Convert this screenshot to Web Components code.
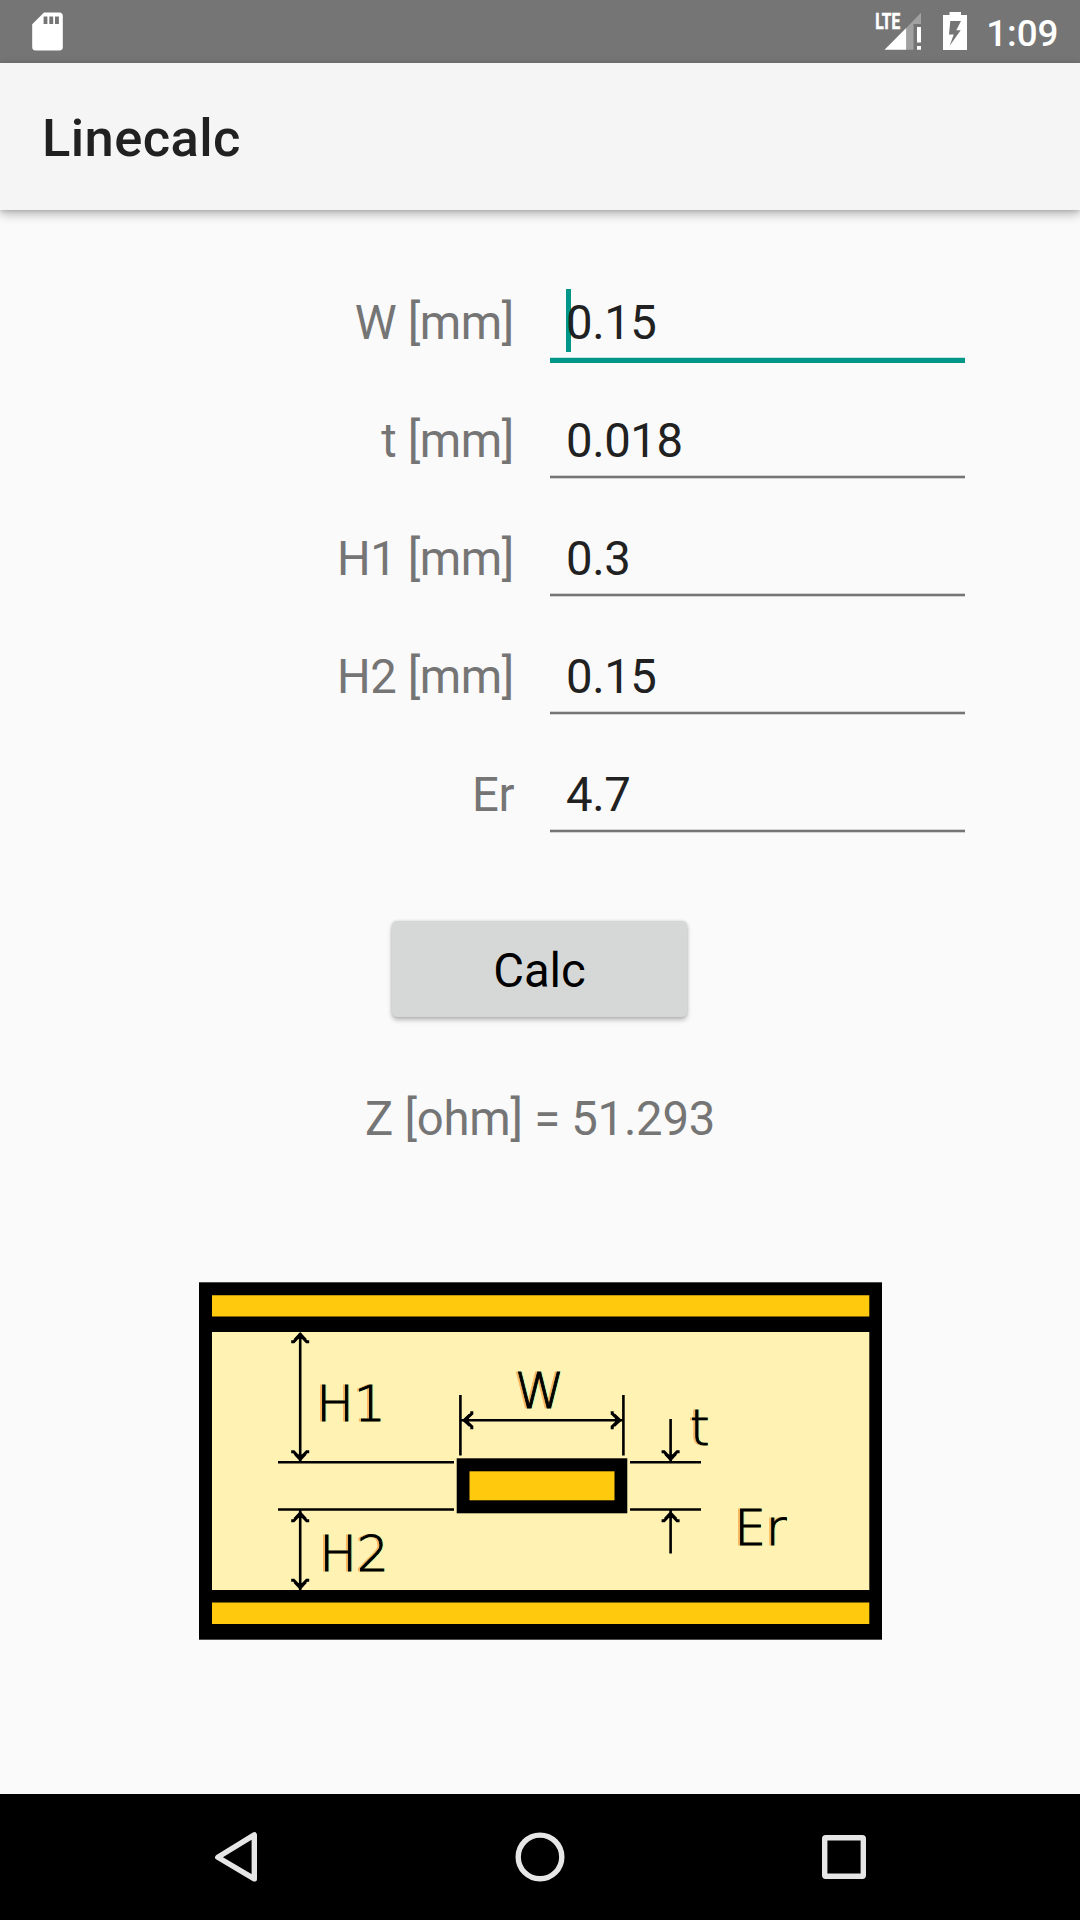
<!DOCTYPE html>
<html lang="en">
<head>
<meta charset="utf-8">
<title>Linecalc</title>
<style>
html,body{margin:0;padding:0;background:#fafafa}
body{font-family:Roboto,"Liberation Sans",sans-serif}
</style>
</head>
<body>
<line-calc-app></line-calc-app>
<script>
function define(name, html) {
  const tpl = document.createElement('template');
  tpl.innerHTML = html;
  customElements.define(name, class extends HTMLElement {
    constructor() {
      super();
      this.attachShadow({ mode: 'open' }).appendChild(tpl.content.cloneNode(true));
    }
  });
}

define('status-bar', `
<style>
:host{display:flex;justify-content:space-between;height:63px;background:#757575;color:#fff}
svg{display:block;flex:none}
.right{display:flex}
.clock{font-size:36.75px;font-weight:500;line-height:43px;padding:12px 21.500px 0 6.300px}
.lte{font:700 21.6px Roboto,sans-serif;stroke:#fff;stroke-width:.6}
</style>
<svg width="80" height="63" viewBox="0 0 80 63">
  <path fill="#fff" fill-rule="evenodd" d="M44 12.5H59.200a3.600 3.600 0 0 1 3.600 3.600V47a3.600 3.600 0 0 1-3.600 3.600H35.800A3.600 3.600 0 0 1 32.200 47V24.300ZM43.600 16.500V24H47.400V16.500ZM49.300 16.500V24H53.200V16.500ZM55 16.500V24H58.900V16.500Z"/>
</svg>
<div class="right">
<svg width="110" height="63" viewBox="870 0 110 63">
  <text class="lte" x="875.200" y="29" fill="#fff" textLength="25" lengthAdjust="spacingAndGlyphs">LTE</text>
  <path fill="#fff" d="M884.500 49.700L906.200 28V49.700Z"/>
  <path fill="#fff" fill-opacity=".32" d="M906.200 28L921 12.800V24H913.500V49.700H906.200Z"/>
  <path fill="#fff" d="M917 27h4v15.500h-4zM917 46h4v3.700h-4z"/>
  <path fill="#fff" fill-rule="evenodd" d="M949.500 12H961V15H967V50H943V15H949.500ZM950.300 21L949 34.500H953.700L949.700 45.800L960.700 30.300H956.300L961 21Z"/>
</svg>
<div class="clock">1:09</div>
</div>`);

define('app-bar', `
<style>
:host{display:flex;box-sizing:border-box;height:147px;padding:45px 42px 0;background:#f5f5f5;color:#212121;
font-size:52.5px;font-weight:500;letter-spacing:.4px;line-height:61px;box-shadow:0 4px 10px rgba(0,0,0,.28),0 1px 4px rgba(0,0,0,.12);position:relative}
</style><slot></slot>`);

define('calc-field', `
<style>
:host{display:flex;height:118px;font-size:47.25px;line-height:56px;letter-spacing:-.4px}
.label{width:514px;padding-top:25px;text-align:right;color:#757575;flex:none}
.box{display:flex;flex-direction:column;width:415px;margin-left:36px;padding-top:25px}
.val{position:relative;height:56px;padding-left:16px;color:#212121}
.line{margin-top:6px;height:4px;background:linear-gradient(#d2d2d2 1px,#757575 1px 3px,#d2d2d2 3px)}
:host([focused]) .line{height:6px;background:linear-gradient(#c4e4e1 1px,#009688 1px)}
.caret{display:none;position:absolute;left:16px;top:-6px;width:5px;height:63px;background:#009688}
:host([focused]) .caret{display:block}
.txt{position:relative}
</style>
<div class="label"><slot name="label"></slot></div>
<div class="box"><div class="val"><i class="caret"></i><span class="txt"><slot></slot></span></div><div class="line"></div></div>`);

define('calc-button', `
<style>
:host{display:block}
button{display:block;box-sizing:border-box;width:295px;height:96px;margin:0 0 0 392px;padding:3px 0 0;border:0;border-radius:5px;background:#d6d8d7;
color:#000;font:400 47.250px/56px Roboto,sans-serif;box-shadow:0 3px 5px rgba(0,0,0,.26),0 0 3px rgba(0,0,0,.14)}
</style><button><slot></slot></button>`);

define('stripline-diagram', `
<style>
:host{display:block;width:683px;height:358px}
svg{display:block}
text{font:200 50px "DejaVu Sans","DejaVu Sans Light",sans-serif;stroke:#000;stroke-width:.9;filter:drop-shadow(-1.500px 0 .4px rgba(255,150,50,.7)) drop-shadow(1.500px 0 .4px rgba(150,255,200,.7))}
.l{stroke:#000;stroke-width:2.600;fill:none}
</style>
<svg width="683" height="358" viewBox="199 1282 683 358">
  <rect x="199" y="1282.300" width="683" height="357.400"/>
  <path fill="#ffc90e" d="M212 1295.200H869.300V1316.500H212ZM212 1602.600H869.300V1624H212Z"/>
  <path fill="#fff2b3" d="M212 1332H869.300V1590H212Z"/>
  <rect x="456.700" y="1458.300" width="170.600" height="55"/>
  <rect x="469.500" y="1471.300" width="145" height="29" fill="#ffc90e"/>
  <path class="l" d="M278 1462.300H454M278 1509.500H454M630 1462.300H701M630 1509.500H701M460.400 1395V1455.500M623.400 1395V1455.500M300.200 1333V1462M300.200 1510V1590M461 1420.200H623M670.600 1419V1462M670.600 1510V1553.500"/>
  <defs><g id="a"><path d="M0 0L-6.500 7H6.500Z"/><path d="M-9 9.800H-6.500L-1 4H1L6.500 9.800H9" fill="none" stroke="#000" stroke-width="3"/></g></defs>
  <use href="#a" transform="translate(300.200 1332)"/>
  <use href="#a" transform="translate(300.200 1461.500) scale(1 -1)"/>
  <use href="#a" transform="translate(300.200 1511)"/>
  <use href="#a" transform="translate(300.200 1590) scale(1 -1)"/>
  <use href="#a" transform="translate(462 1420.200) rotate(-90)"/>
  <use href="#a" transform="translate(622 1420.200) rotate(90)"/>
  <use href="#a" transform="translate(670.600 1461.500) scale(1 -1)"/>
  <use href="#a" transform="translate(670.600 1511)"/>
  <text x="316.500" y="1421">H1</text>
  <text x="319.500" y="1571">H2</text>
  <text x="515" y="1407.800">W</text>
  <text x="690" y="1444.500">t</text>
  <text x="734.500" y="1545">Er</text>
</svg>`);

define('nav-bar', `
<style>
:host{display:flex;justify-content:center;height:126px;background:#000}
svg{display:block;fill:none;stroke:#e6e6e6;stroke-width:5.400;stroke-linejoin:round}
</style>
<svg width="304" height="126" viewBox="84 1794 304 126"><path d="M217.800 1857.300L254.300 1834.900V1878.900Z"/></svg>
<svg width="304" height="126" viewBox="388 1794 304 126"><circle cx="540" cy="1856.900" r="21.800"/></svg>
<svg width="304" height="126" viewBox="692 1794 304 126"><rect x="824.700" y="1837.700" width="38.600" height="38.600" rx="1"/></svg>`);

define('line-calc-app', `
<style>
:host{display:flex;flex-direction:column;width:1080px;height:1920px;background:#fafafa;overflow:hidden}
main{display:flex;flex-direction:column;flex:1;padding-top:60px}
calc-button{margin-top:61px}
.result{margin-top:74px;text-align:center;font-size:47.250px;line-height:56px;letter-spacing:-.25px;color:#757575}
stripline-diagram{margin:135px 0 0 199px}
</style>
<status-bar></status-bar>
<app-bar>Linecalc</app-bar>
<main>
  <calc-field focused><span slot="label">W [mm]</span>0.15</calc-field>
  <calc-field><span slot="label">t [mm]</span>0.018</calc-field>
  <calc-field><span slot="label">H1 [mm]</span>0.3</calc-field>
  <calc-field><span slot="label">H2 [mm]</span>0.15</calc-field>
  <calc-field><span slot="label">Er</span>4.7</calc-field>
  <calc-button>Calc</calc-button>
  <div class="result">Z [ohm] = 51.293</div>
  <stripline-diagram></stripline-diagram>
</main>
<nav-bar></nav-bar>`);
</script>
</body>
</html>
